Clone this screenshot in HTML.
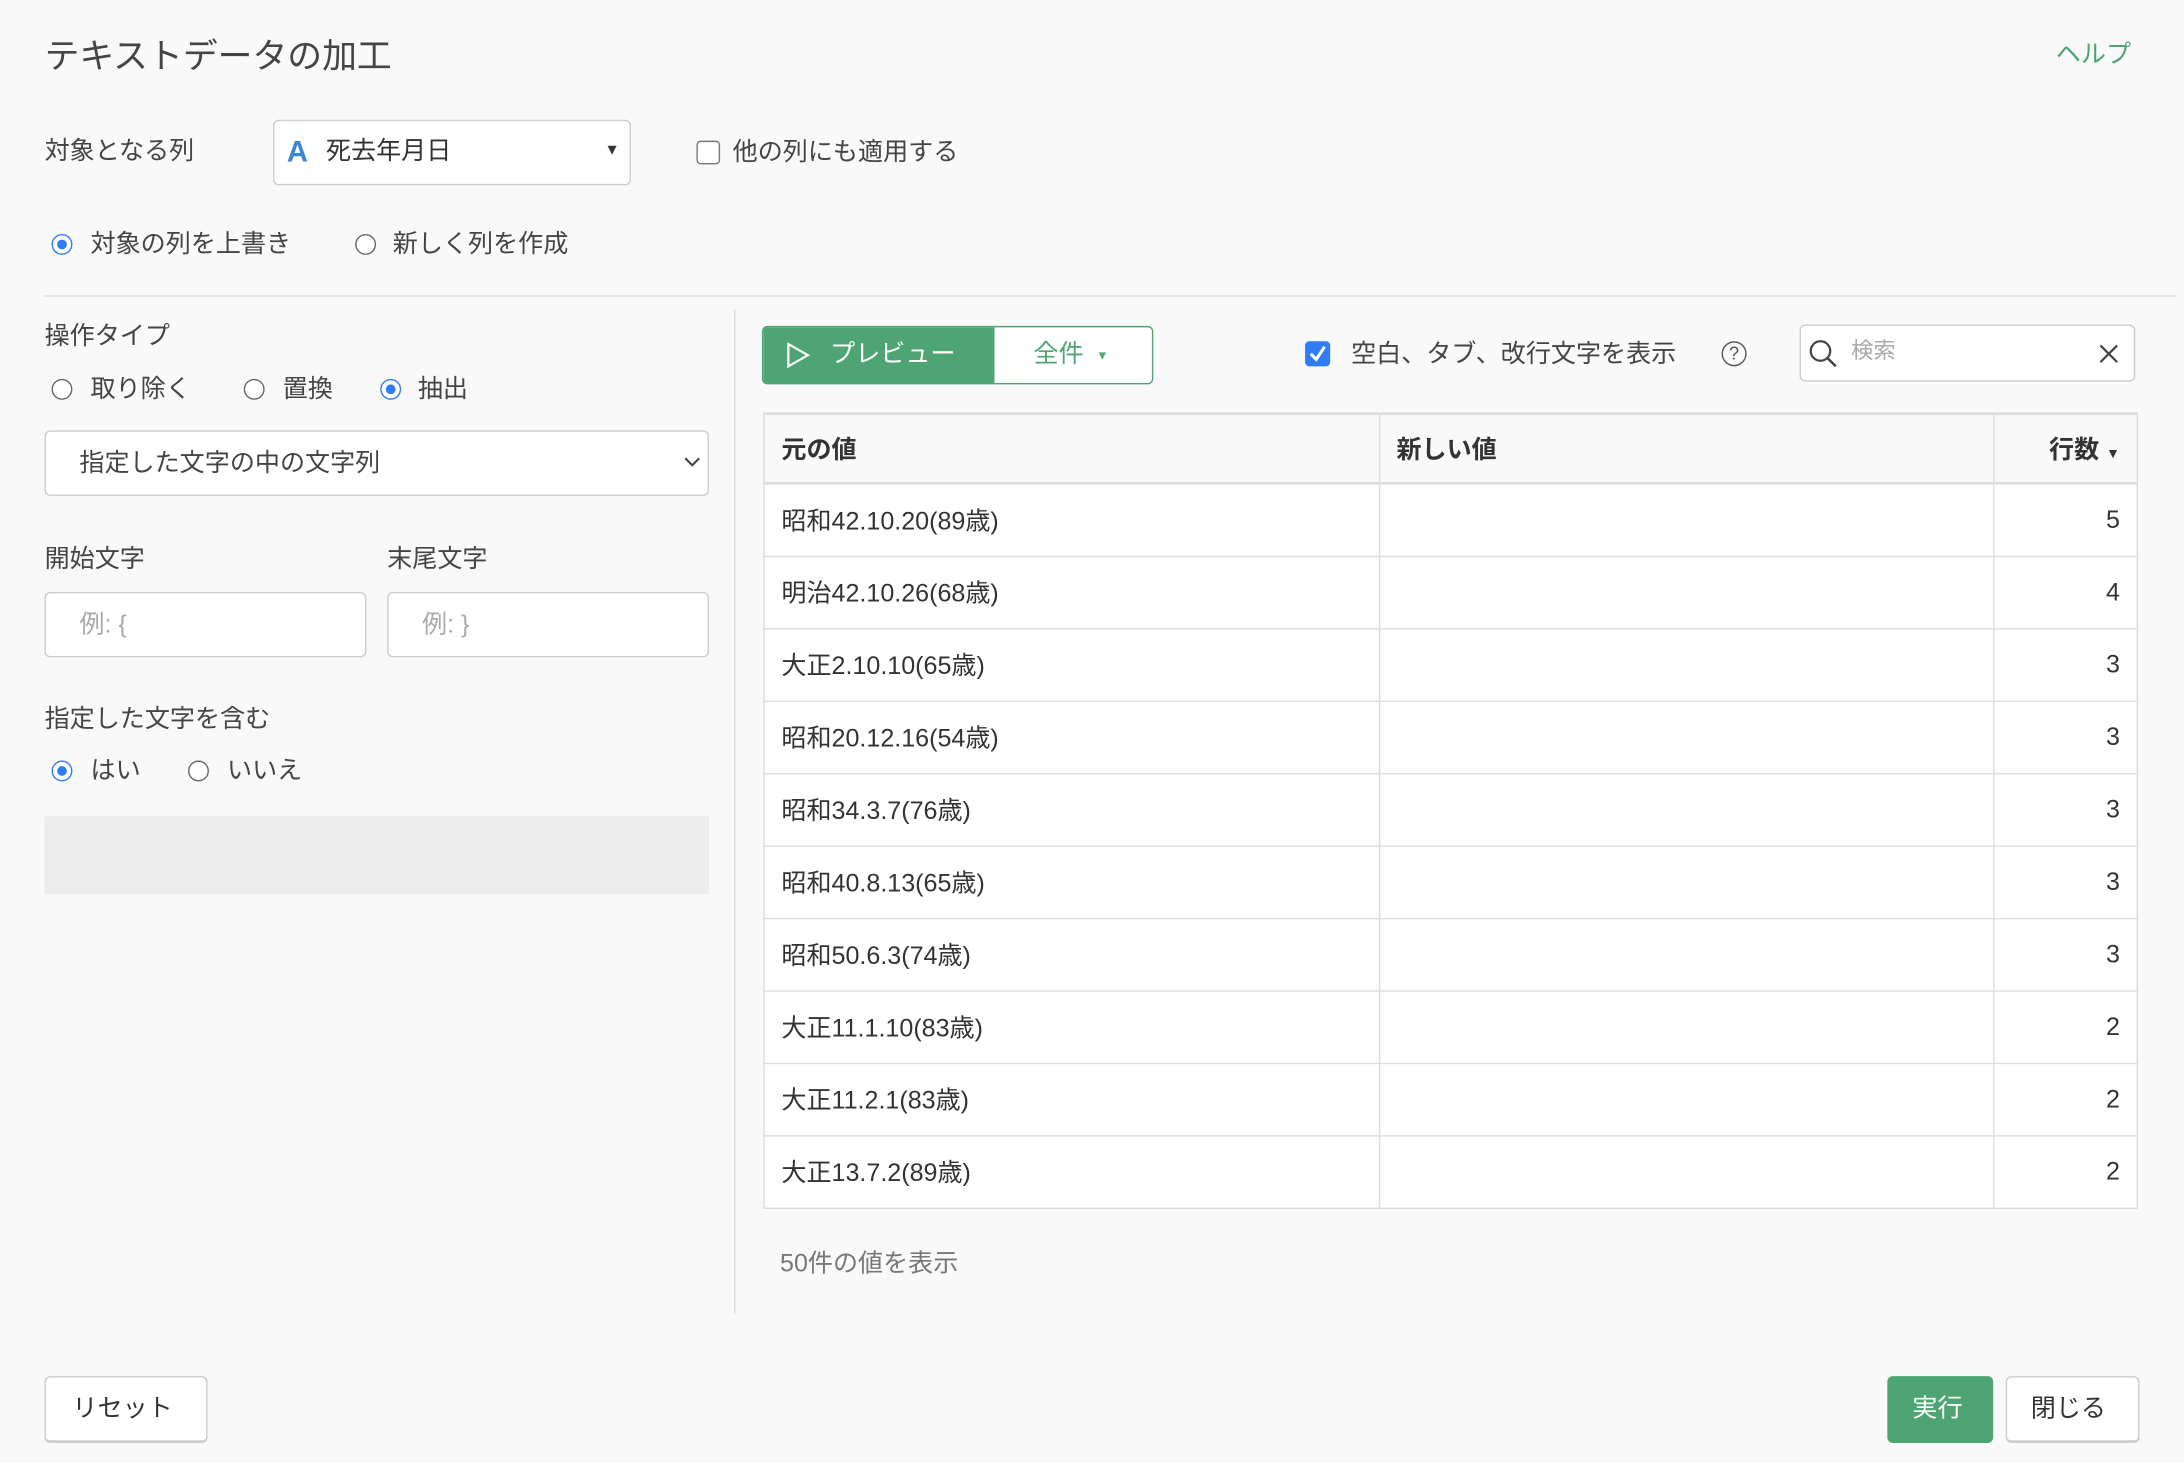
<!DOCTYPE html>
<html><head><meta charset="utf-8"><style>
html,body{margin:0;padding:0;background:#f9f9f9;width:2184px;height:1462px;overflow:hidden}
#w{position:absolute;left:0;top:0;width:1568px;height:1050px;transform:scale(1.392857);transform-origin:0 0;font-family:"Liberation Sans","Noto Sans CJK JP",sans-serif;color:#444;font-size:18px}
.a{position:absolute;white-space:nowrap;line-height:1}
.rad{position:absolute;width:15px;height:15px;border:1.5px solid #666;border-radius:50%;background:#fff;box-sizing:border-box}
.rad.on{border-color:#2f7cf6}
.rad.on:after{content:"";position:absolute;left:2.5px;top:2.5px;width:7px;height:7px;border-radius:50%;background:#2f7cf6}
.box{position:absolute;background:#fff;border:1px solid #ccc;border-radius:4px;box-sizing:border-box}
table{position:absolute;left:548px;top:296px;border-collapse:collapse;width:987px;font-size:18px;color:#333}
td,th{border:1px solid #ddd;height:52px;padding:0 12px;box-sizing:border-box}
th{background:#f9f9f9;text-align:left;font-weight:bold;height:50px;border-top:2px solid #ddd;border-bottom:2px solid #ddd}
td{background:#fff}
.r{text-align:right}
</style></head><body><div id="w">
<div class="a" style="left:32px;top:29px;font-size:25px;color:#444">テキストデータの加工</div>
<div class="a" style="left:1476px;top:30px;color:#4ea573;font-size:18px">ヘルプ</div>
<div class="a" style="left:32px;top:99px">対象となる列</div>
<div class="box" style="left:196px;top:86px;width:257px;height:47px"></div>
<div class="a" style="left:206px;top:99px;color:#3b86d0;font-weight:bold;font-size:21px">A</div>
<div class="a" style="left:234px;top:99px;color:#333">死去年月日</div>
<div class="a" style="left:434px;top:103px;font-size:11px;color:#333">▼</div>
<div class="box" style="left:500px;top:101px;width:17px;height:17px;border-color:#777;border-radius:3px"></div>
<div class="a" style="left:526px;top:100px">他の列にも適用する</div>
<div class="rad on" style="left:37px;top:168px"></div>
<div class="a" style="left:65px;top:166px">対象の列を上書き</div>
<div class="rad" style="left:255px;top:168px"></div>
<div class="a" style="left:282px;top:166px">新しく列を作成</div>
<div style="position:absolute;left:32px;top:212px;width:1530px;height:1px;background:#ddd"></div>
<div style="position:absolute;left:527px;top:222px;width:1px;height:721px;background:#ddd"></div>
<div class="a" style="left:32px;top:232px">操作タイプ</div>
<div class="rad" style="left:37px;top:272px"></div><div class="a" style="left:65px;top:270px">取り除く</div>
<div class="rad" style="left:175px;top:272px"></div><div class="a" style="left:203px;top:270px">置換</div>
<div class="rad on" style="left:273px;top:272px"></div><div class="a" style="left:300px;top:270px">抽出</div>
<div class="box" style="left:32px;top:309px;width:477px;height:47px"></div>
<div class="a" style="left:57px;top:323px">指定した文字の中の文字列</div>
<svg style="position:absolute;left:490px;top:327px" width="14" height="10"><path d="M2 2l5 5 5-5" stroke="#444" stroke-width="1.5" fill="none"/></svg>
<div class="a" style="left:32px;top:392px">開始文字</div>
<div class="a" style="left:278px;top:392px">末尾文字</div>
<div class="box" style="left:32px;top:425px;width:231px;height:47px"></div>
<div class="a" style="left:57px;top:439px;color:#aaa">例: {</div>
<div class="box" style="left:278px;top:425px;width:231px;height:47px"></div>
<div class="a" style="left:303px;top:439px;color:#aaa">例: }</div>
<div class="a" style="left:32px;top:507px">指定した文字を含む</div>
<div class="rad on" style="left:37px;top:546px"></div><div class="a" style="left:65px;top:544px">はい</div>
<div class="rad" style="left:135px;top:546px"></div><div class="a" style="left:163px;top:544px">いいえ</div>
<div style="position:absolute;left:32px;top:586px;width:477px;height:56px;background:#ececec"></div>
<div style="position:absolute;left:547px;top:234px;width:281px;height:42px;border:1.5px solid #4ea573;border-radius:4px;box-sizing:border-box;background:#fff;overflow:hidden">
<div style="position:absolute;left:0;top:0;width:166px;height:100%;background:#4ea573"></div></div>
<svg style="position:absolute;left:564px;top:245px" width="18" height="20"><path d="M2 2L16 10L2 18Z" stroke="#fff" stroke-width="1.6" fill="none"/></svg>
<div class="a" style="left:596px;top:245px;color:#fff">プレビュー</div>
<div class="a" style="left:742px;top:245px;color:#4ea573">全件</div>
<div class="a" style="left:787px;top:251px;color:#4ea573;font-size:9px">▼</div>
<div style="position:absolute;left:937px;top:245px;width:18px;height:18px;background:#2f7cf6;border-radius:3px"></div>
<svg style="position:absolute;left:937px;top:245px" width="18" height="18"><path d="M4 9l4 4 6-9" stroke="#fff" stroke-width="2.2" fill="none"/></svg>
<div class="a" style="left:970px;top:245px">空白、タブ、改行文字を表示</div>
<div style="position:absolute;left:1236px;top:245px;width:18px;height:18px;border:1.3px solid #555;border-radius:50%;box-sizing:border-box;font-size:13px;text-align:center;line-height:16px;color:#555">?</div>
<div class="box" style="left:1292px;top:233px;width:241px;height:41px"></div>
<svg style="position:absolute;left:1298px;top:243px" width="24" height="24"><circle cx="9" cy="9" r="7" stroke="#444" stroke-width="1.6" fill="none"/><path d="M14 14l6 6" stroke="#444" stroke-width="1.8"/></svg>
<div class="a" style="left:1329px;top:245px;color:#aaa;font-size:16px">検索</div>
<svg style="position:absolute;left:1507px;top:247px" width="14" height="14"><path d="M1 1l12 12M13 1L1 13" stroke="#444" stroke-width="1.6"/></svg>
<table>
<colgroup><col style="width:442px"><col style="width:442px"><col style="width:103px"></colgroup>
<tr><th>元の値</th><th>新しい値</th><th class="r">行数 <span style="font-size:10px">▼</span></th></tr>
<tr><td>昭和42.10.20(89歳)</td><td></td><td class="r">5</td></tr>
<tr><td>明治42.10.26(68歳)</td><td></td><td class="r">4</td></tr>
<tr><td>大正2.10.10(65歳)</td><td></td><td class="r">3</td></tr>
<tr><td>昭和20.12.16(54歳)</td><td></td><td class="r">3</td></tr>
<tr><td>昭和34.3.7(76歳)</td><td></td><td class="r">3</td></tr>
<tr><td>昭和40.8.13(65歳)</td><td></td><td class="r">3</td></tr>
<tr><td>昭和50.6.3(74歳)</td><td></td><td class="r">3</td></tr>
<tr><td>大正11.1.10(83歳)</td><td></td><td class="r">2</td></tr>
<tr><td>大正11.2.1(83歳)</td><td></td><td class="r">2</td></tr>
<tr><td>大正13.7.2(89歳)</td><td></td><td class="r">2</td></tr>
</table>
<div class="a" style="left:560px;top:898px;color:#777">50件の値を表示</div>
<div class="box" style="left:32px;top:988px;width:117px;height:48px;border-bottom:2px solid #ccc"></div>
<div class="a" style="left:52px;top:1002px;color:#333">リセット</div>
<div style="position:absolute;left:1355px;top:988px;width:76px;height:48px;background:#4ea573;border-radius:4px"></div>
<div class="a" style="left:1373px;top:1002px;color:#fff">実行</div>
<div class="box" style="left:1440px;top:988px;width:96px;height:48px;border-bottom:2px solid #ccc"></div>
<div class="a" style="left:1458px;top:1002px;color:#333">閉じる</div>
</div></body></html>
